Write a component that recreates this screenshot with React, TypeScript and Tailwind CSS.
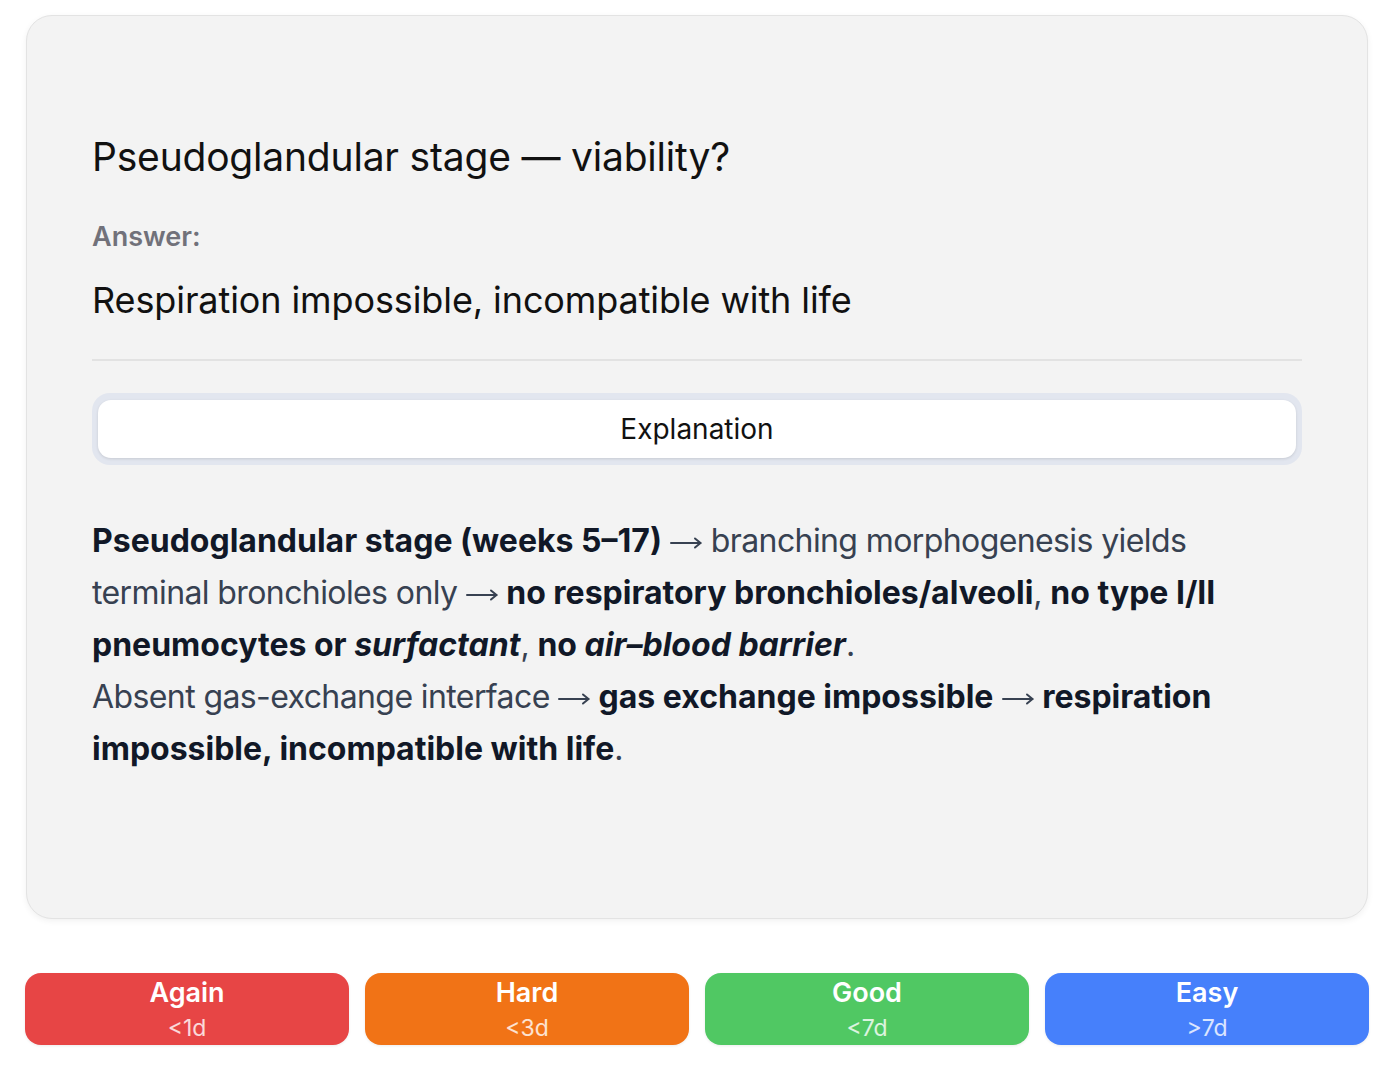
import React from "react";

const buttons = [
  { label: "Again", sub: "<1d", cls: "bg-[#e74545]" },
  { label: "Hard", sub: "<3d", cls: "bg-[#f17316]" },
  { label: "Good", sub: "<7d", cls: "bg-[#50c863]" },
  { label: "Easy", sub: ">7d", cls: "bg-[#4680fb]" },
];

function Arrow() {
  return (
    <svg
      width="32"
      height="14"
      viewBox="0 0 32 14"
      className="inline-block align-middle"
      fill="none"
      stroke="#374151"
      strokeWidth="2"
      strokeLinecap="round"
      strokeLinejoin="round"
    >
      <path d="M1 7H30.5" />
      <path d="M25 2.5L30.5 7L25 11.5" />
    </svg>
  );
}

const B = ({ children }: { children: React.ReactNode }) => (
  <b className="font-bold text-[#111827] tracking-normal">{children}</b>
);

export default function App() {
  return (
    <div
      className="min-h-screen bg-white px-[25px] pt-[15px]"
      style={{ fontFamily: "Inter, 'Noto Sans', sans-serif" }}
    >
      <div className="mx-[1px] rounded-[26px] border border-[#e3e3e3] bg-[#f3f3f3] px-[65px] pt-[117px] pb-[143px] shadow-[0_2px_6px_rgba(0,0,0,0.06)]">
        <h1 className="text-[39px] leading-[48px] font-normal text-[#111111] tracking-[-0.2px]">
          Pseudoglandular stage — viability?
        </h1>
        <div className="mt-[39px] text-[27px] leading-[34px] font-semibold text-[#71717a]">
          Answer:
        </div>
        <div className="mt-[24px] text-[36px] leading-[44px] tracking-[-0.1px] text-[#111111]">
          Respiration impossible, incompatible with life
        </div>
        <div className="mt-[37px] h-[2px] bg-[#e2e2e2]" />
        <div className="mt-[32px] rounded-[18px] bg-[#e2e6ef] px-[6px] py-[7px]">
          <div className="flex h-[58px] items-center justify-center rounded-[13px] bg-white shadow-[0_1px_3px_rgba(0,0,0,0.12)] text-[28px] text-[#111111]">
            Explanation
          </div>
        </div>
        <p className="mt-[50px] text-[32px] leading-[52px] text-[#374151] tracking-[-0.6px]">
          <B>Pseudoglandular stage (weeks 5–17)</B> <Arrow /> branching morphogenesis yields terminal
          bronchioles only <Arrow /> <B>no respiratory bronchioles/alveoli</B>,{" "}
          <B>
            no type I/II pneumocytes or <i>surfactant</i>
          </B>
          ,{" "}
          <B>
            no <i>air–blood barrier</i>
          </B>
          .
          <br />
          Absent gas-exchange interface <Arrow /> <B>gas exchange impossible</B> <Arrow />{" "}
          <B>respiration impossible, incompatible with life</B>.
        </p>
      </div>
      <div className="mt-[54px] grid grid-cols-4 gap-[16px]">
        {buttons.map((b) => (
          <div
            key={b.label}
            className={`${b.cls} flex h-[72px] flex-col items-center pt-[4px] rounded-[16px] text-white shadow-[0_1px_3px_rgba(0,0,0,0.08)]`}
          >
            <div className="text-[27px] leading-[32px] font-semibold">{b.label}</div>
            <div className="mt-[5px] text-[23px] leading-[28px] text-white/80">{b.sub}</div>
          </div>
        ))}
      </div>
    </div>
  );
}
